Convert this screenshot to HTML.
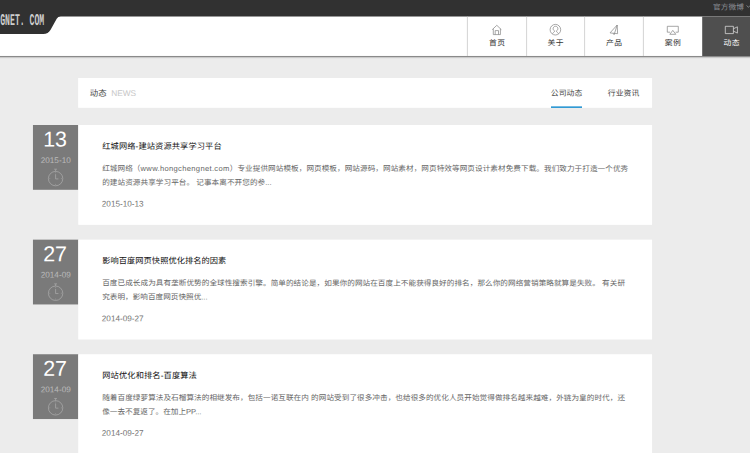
<!DOCTYPE html>
<html lang="zh-CN">
<head>
<meta charset="utf-8">
<title>动态 NEWS</title>
<style>
html,body{margin:0;padding:0}
html{background:#ececec}
body{width:750px;height:453px;overflow:hidden;background:#ececec;position:relative;
  font-family:"Liberation Sans",sans-serif;color:#666;text-rendering:geometricPrecision}
*{box-sizing:border-box}
.a{position:absolute;left:0;top:0;margin:0;white-space:nowrap;transform-origin:0 0}
.j{text-align:justify;text-align-last:justify;text-justify:inter-character}
span.j{display:block}
#bg{width:750px;height:453px}
/* header */
#logotxt{font-family:"Liberation Mono",monospace;font-weight:bold;font-size:16.3px;line-height:16px;color:#cdcdcd;
  transform:translate(.2px,12.9px) scaleX(.501)}
#weibo{width:31px;font-size:7.65px;line-height:10px;color:#8b8e94}
.t{width:16px;font-size:7.8px;line-height:10px;color:#333}
/* title bar */
#t1{width:17px;font-size:8.4px;line-height:10px;color:#444}
#t2{font-size:8.3px;line-height:10px;color:#c6c6c6}
#tab1,#tab2{width:31.6px;font-size:7.8px;line-height:10px;color:#444}
/* cards */
.d{width:45.6px;text-align:center;font-size:21.4px;line-height:24px;color:#fff}
.m{width:45.6px;text-align:center;font-size:8.2px;line-height:10px;color:#bbb}
h3{font-weight:normal;font-size:8.22px;line-height:11px;color:#111}
p{font-size:7.6px;line-height:13.7px;color:#666}
.en{letter-spacing:.32px}
.dt{font-size:8.2px;line-height:10px;color:#747474}
</style>
</head>
<body>
<svg id="bg" class="a" viewBox="0 0 750 453">
<!-- header -->
<rect x="0" y="16" width="750" height="40" fill="#fff"/>
<rect x="0" y="55.97" width="750" height="1.03" fill="#8a8a8a"/>
<rect x="0" y="57" width="750" height="1" fill="#cacaca"/><rect x="0" y="58" width="750" height="1" fill="#e6e6e6"/>
<path d="M0 0H750V16.6H60.8Q57.9 16.6 56.7 18.7L50.6 29.7Q48.3 33.9 43.2 33.9H0Z" fill="#313131"/>
<rect x="702.2" y="16.6" width="48" height="39.4" fill="#4f4f4f"/>
<path d="M467.4 16.6V56M526.6 16.6V56M584.6 16.6V56M643.4 16.6V56" stroke="#c2c2c2" stroke-width=".7" fill="none"/>
<!-- nav icons -->
<g fill="none" stroke="#858585" stroke-width=".72">
<path d="M492.2 29.7L496.8 25.3L501.4 29.7M493.3 28.8V34.6H500.4V28.8M495.2 34.6V30.6H498.5V34.6"/>
<circle cx="555.4" cy="29.7" r="5.3"/><path d="M552.5 33.7C553.3 32.4 554.5 32.2 554.6 30.9A2.4 2.4 0 1 1 556.4 30.9C556.5 32.2 557.7 32.4 558.5 33.7"/>
<path d="M617.2 25L610 32.9L617.6 33.7ZM617.2 25L614.1 34.7L613.2 33.3" stroke-linejoin="round"/>
<path d="M670 32.2H667.3V26.3H678.3V32.2H675.6M672.8 30.4L669.8 34.3H675.8Z"/>
</g>
<path d="M725.3 26.3H733.4V33.6H725.3ZM733.4 28.8L737.4 26.8V33.1L733.4 31.1" fill="none" stroke="#ddd" stroke-width=".75"/>
<path d="M746.6 5.4L748.4 7.4L750.2 5.4" fill="none" stroke="#8a8f96" stroke-width=".8"/>
<!-- title bar -->
<rect x="78.15" y="78" width="573.9" height="29.8" fill="#fff"/>
<rect x="551" y="106.4" width="31" height="1.5" fill="#1b8fd0"/>
<!-- cards -->
<rect x="32.95" y="125.0" width="45.35" height="64.8" fill="#7a7a7a"/>
<rect x="78.25" y="125.0" width="573.8" height="99.85" fill="#fff"/>
<g fill="none" stroke="#a9a9a9" stroke-width=".75"><circle cx="55.6" cy="178.6" r="7.2"/><path d="M55.6 171.4V169.4M54.2 169.2H57M55.6 174.2V178.9H58.4"/><path stroke-width=".5" d="M55.6 172.2v1.1M55.6 185.0v-1.1M49.2 178.6h1.1M62 178.6h-1.1"/></g>
<rect x="32.95" y="239.65" width="45.35" height="64.8" fill="#7a7a7a"/>
<rect x="78.25" y="239.65" width="573.8" height="99.85" fill="#fff"/>
<g fill="none" stroke="#a9a9a9" stroke-width=".75"><circle cx="55.6" cy="293.25" r="7.2"/><path d="M55.6 286.05V284.05M54.2 283.85H57M55.6 288.85V293.55H58.4"/><path stroke-width=".5" d="M55.6 286.85v1.1M55.6 299.65v-1.1M49.2 293.25h1.1M62 293.25h-1.1"/></g>
<rect x="32.95" y="354.25" width="45.35" height="64.8" fill="#7a7a7a"/>
<rect x="78.25" y="354.25" width="573.8" height="99.85" fill="#fff"/>
<g fill="none" stroke="#a9a9a9" stroke-width=".75"><circle cx="55.6" cy="407.85" r="7.2"/><path d="M55.6 400.65V398.65M54.2 398.45H57M55.6 403.45V408.15H58.4"/><path stroke-width=".5" d="M55.6 401.45v1.1M55.6 414.25v-1.1M49.2 407.85h1.1M62 407.85h-1.1"/></g>
</svg>

<div id="logotxt" class="a">GNET. COM</div>
<div id="weibo" class="a j" style="transform:translate(712.90px,2.70px) rotate(.03deg)">官方微博</div>
<div class="a t j" style="transform:translate(489.00px,38.50px) rotate(.03deg)">首页</div>
<div class="a t j" style="transform:translate(547.60px,38.50px) rotate(.03deg)">关于</div>
<div class="a t j" style="transform:translate(606.00px,38.50px) rotate(.03deg)">产品</div>
<div class="a t j" style="transform:translate(664.80px,38.50px) rotate(.03deg)">案例</div>
<div class="a t j" style="transform:translate(723.60px,38.50px) rotate(.03deg);color:#fff">动态</div>

<div id="t1" class="a j" style="transform:translate(89.70px,88.10px) rotate(.03deg)">动态</div>
<div id="t2" class="a" style="transform:translate(111.20px,87.90px) rotate(.03deg)">NEWS</div>
<div id="tab1" class="a j" style="transform:translate(550.70px,88.70px) rotate(.03deg)">公司动态</div>
<div id="tab2" class="a j" style="transform:translate(607.70px,88.70px) rotate(.03deg)">行业资讯</div>

<div class="a d" style="transform:translate(32.30px,127.55px) rotate(.03deg)">13</div>
<div class="a m" style="transform:translate(32.95px,155.90px) rotate(.03deg)">2015-10</div>
<h3 class="a j" style="width:119.4px;transform:translate(102.25px,140.90px) rotate(.03deg)">红城网络-建站资源共享学习平台</h3>
<p class="a" style="transform:translate(102.20px,161.90px) rotate(.03deg)"><span class="j" style="width:526.0px">红城网络（<span class="en">www.hongchengnet.com</span>）专业提供网站模板，网页模板，网站源码，网站素材，网页特效等网页设计素材免费下载。我们致力于打造一个优秀</span><span class="j" style="width:169.4px">的建站资源共享学习平台。 记事本离不开您的参...</span></p>
<div class="a dt" style="transform:translate(101.80px,199.50px) rotate(.03deg)">2015-10-13</div>
<div class="a d" style="transform:translate(32.30px,242.20px) rotate(.03deg)">27</div>
<div class="a m" style="transform:translate(32.95px,270.55px) rotate(.03deg)">2014-09</div>
<h3 class="a j" style="width:124.0px;transform:translate(102.25px,255.55px) rotate(.03deg)">影响百度网页快照优化排名的因素</h3>
<p class="a" style="transform:translate(102.20px,276.55px) rotate(.03deg)"><span class="j" style="width:522.8px">百度已成长成为具有垄断优势的全球性搜索引擎。简单的结论是，如果你的网站在百度上不能获得良好的排名，那么你的网络营销策略就算是失败。 有关研</span><span class="j" style="width:105.4px">究表明，影响百度网页快照优...</span></p>
<div class="a dt" style="transform:translate(101.80px,314.15px) rotate(.03deg)">2014-09-27</div>
<div class="a d" style="transform:translate(32.30px,356.80px) rotate(.03deg)">27</div>
<div class="a m" style="transform:translate(32.95px,385.15px) rotate(.03deg)">2014-09</div>
<h3 class="a j" style="width:94.6px;transform:translate(102.25px,370.15px) rotate(.03deg)">网站优化和排名-百度算法</h3>
<p class="a" style="transform:translate(102.20px,391.15px) rotate(.03deg)"><span class="j" style="width:522.8px">随着百度绿萝算法及石榴算法的相继发布，包括一诺互联在内 的网站受到了很多冲击，也给很多的优化人员开始觉得做排名越来越难，外链为皇的时代，还</span><span class="j" style="width:99.3px">像一去不复返了。在加上PP...</span></p>
<div class="a dt" style="transform:translate(101.80px,428.75px) rotate(.03deg)">2014-09-27</div>
</body>
</html>
